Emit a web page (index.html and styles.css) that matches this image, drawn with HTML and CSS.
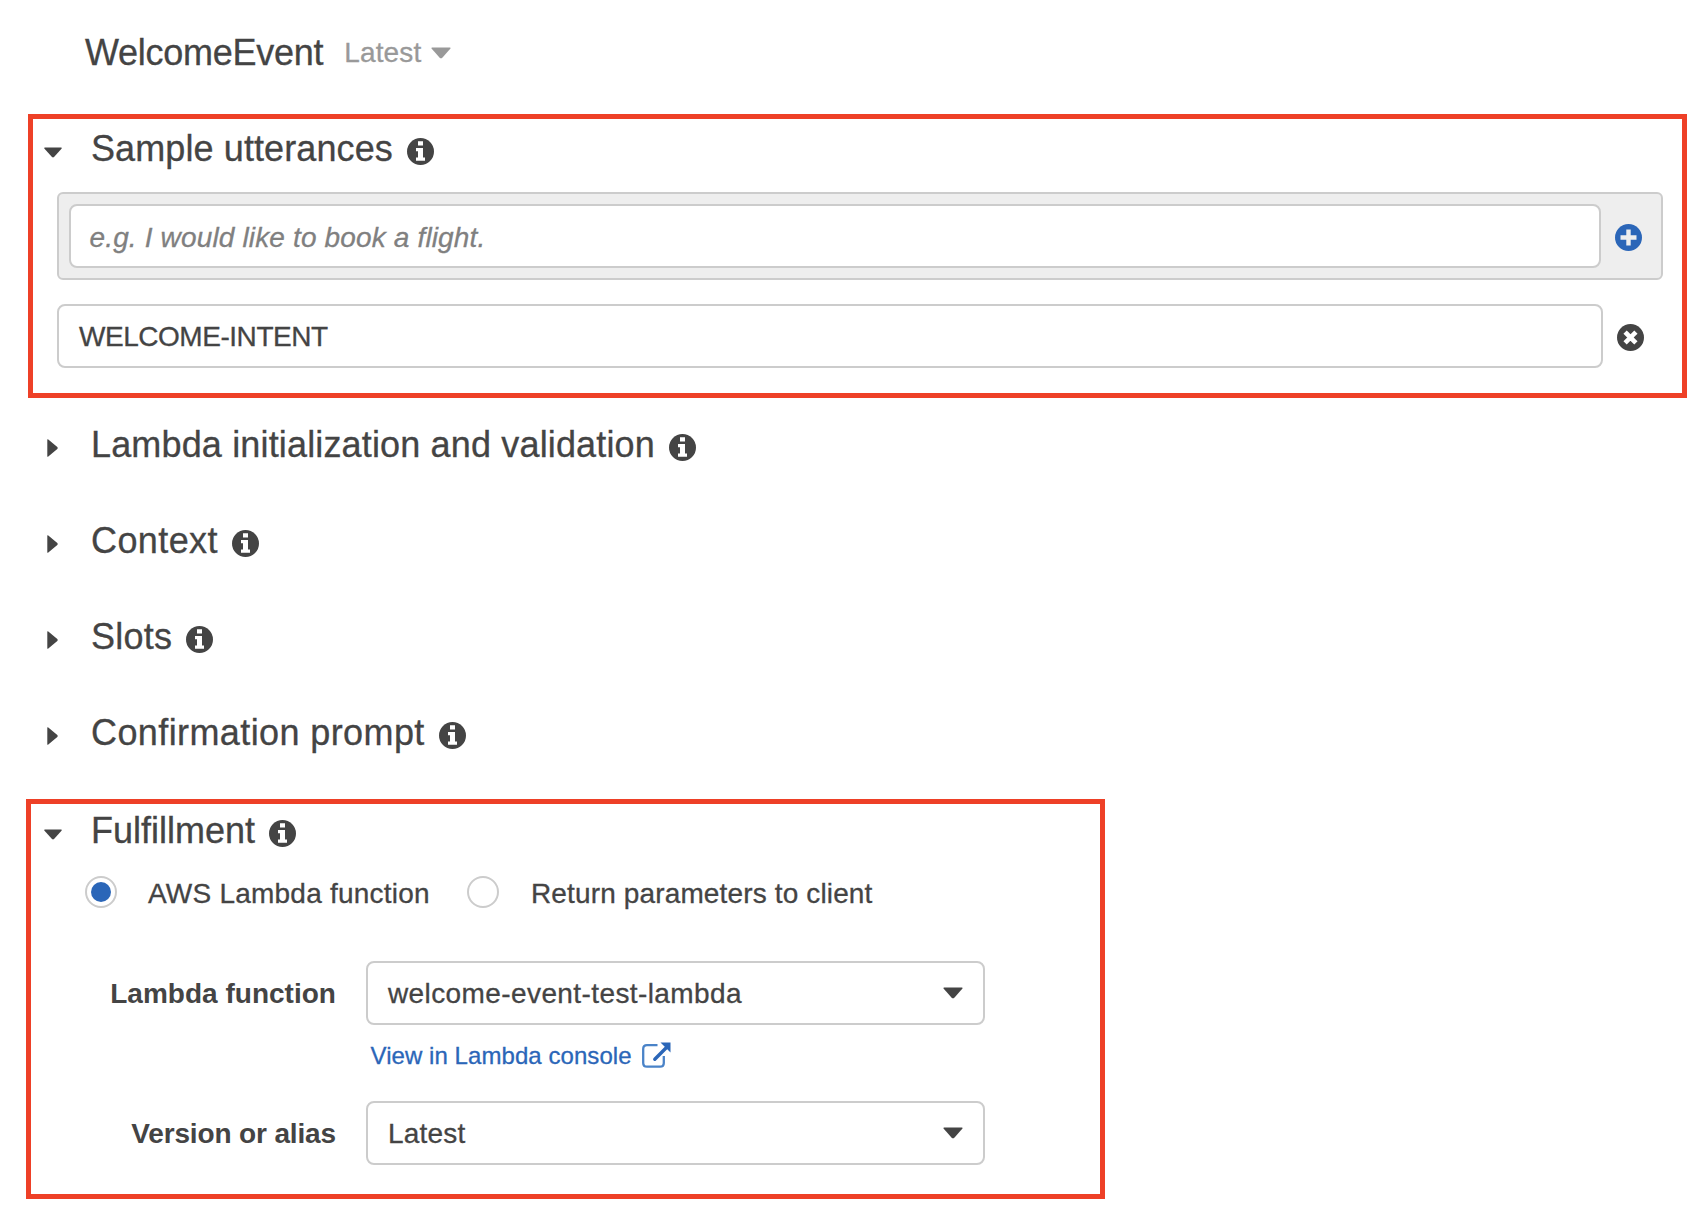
FILE: index.html
```html
<!DOCTYPE html>
<html lang="en">
<head>
<meta charset="utf-8">
<title>WelcomeEvent</title>
<link rel="stylesheet" href="styles.css">
</head>
<body>
<svg class="defs" aria-hidden="true">
  <symbol id="info" viewBox="0 0 27 27">
    <circle cx="13.5" cy="13.5" r="13.5" fill="#444"/>
    <path d="M11 3.2h5v4.2h-5zM9 10h7v9.600h2v3.200H9v-3.200h2V13.200H9z" fill="#fff"/>
  </symbol>
  <symbol id="down" viewBox="0 0 18 11">
    <path d="M.8.500h16.400q1 .3.300 1.200L10 10q-1 .8-2 0L.5 1.700Q-.2.800.8.500z" fill="currentColor"/>
  </symbol>
  <symbol id="right" viewBox="0 0 11 18">
    <path d="M.3.600Q.6-.2 1.300.400L10.300 8q.8 1 0 2L1.300 17.600Q.6 18.200.3 17.400z" fill="currentColor"/>
  </symbol>
</svg>

<header class="title-bar">
  <h1 class="title">WelcomeEvent</h1>
  <span class="version">Latest</span>
  <svg class="version-caret"><use href="#down"/></svg>
</header>

<section class="panel utterances">
  <h2 class="heading"><span class="toggle"><svg class="down"><use href="#down"/></svg></span><span class="t-sample">Sample utterances</span><svg class="info"><use href="#info"/></svg></h2>
  <div class="new-utterance">
    <div class="field placeholder">e.g. I would like to book a flight.</div>
    <svg class="action" viewBox="0 0 27 27"><circle cx="13.500" cy="13.500" r="13.500" fill="#2b66b8"/><path d="M13.500 7.700v11.600M7.700 13.500h11.600" stroke="#eee" stroke-width="4.400" stroke-linecap="square" fill="none"/></svg>
  </div>
  <div class="utterance">
    <div class="field value">WELCOME-INTENT</div>
    <svg class="action" viewBox="0 0 27 27"><circle cx="13.500" cy="13.500" r="13.500" fill="#444"/><path d="M9.700 9.700l7.600 7.600M17.300 9.700l-7.600 7.600" stroke="#fff" stroke-width="4.600" stroke-linecap="square" fill="none"/></svg>
  </div>
</section>

<div class="collapsed">
  <h2 class="heading"><span class="toggle"><svg class="right"><use href="#right"/></svg></span><span class="t-init">Lambda initialization and validation</span><svg class="info"><use href="#info"/></svg></h2>
  <h2 class="heading"><span class="toggle"><svg class="right"><use href="#right"/></svg></span><span class="t-context">Context</span><svg class="info"><use href="#info"/></svg></h2>
  <h2 class="heading"><span class="toggle"><svg class="right"><use href="#right"/></svg></span><span class="t-slots">Slots</span><svg class="info"><use href="#info"/></svg></h2>
  <h2 class="heading"><span class="toggle"><svg class="right"><use href="#right"/></svg></span><span class="t-confirm">Confirmation prompt</span><svg class="info"><use href="#info"/></svg></h2>
</div>

<section class="panel fulfillment">
  <h2 class="heading"><span class="toggle"><svg class="down"><use href="#down"/></svg></span><span>Fulfillment</span><svg class="info"><use href="#info"/></svg></h2>
  <div class="radios">
    <span class="radio checked"></span><span class="radio-label aws">AWS Lambda function</span>
    <span class="radio"></span><span class="radio-label return">Return parameters to client</span>
  </div>
  <div class="form">
    <span class="label">Lambda function</span>
    <div class="select"><span class="fn-name">welcome-event-test-lambda</span><svg class="select-caret"><use href="#down"/></svg></div>
    <a class="link"><span>View in Lambda console</span>
      <svg class="external" viewBox="0 0 29 26"><path d="M15.500 3.200H5q-3.800 0-3.800 3.800v14q0 3.700 3.800 3.700h13q3.800 0 3.800-3.700v-7" fill="none" stroke="#4a83c8" stroke-width="2.300"/><path d="M12.800 17.200L24 6" stroke="#2b66b8" stroke-width="3.400" stroke-linecap="round"/><path d="M18.500.500h10v10z" fill="#2b66b8"/></svg></a>
    <span class="label alias">Version or alias</span>
    <div class="select"><span class="alias-name">Latest</span><svg class="select-caret"><use href="#down"/></svg></div>
  </div>
</section>
</body>
</html>
```
FILE: styles.css
```css
* { box-sizing: border-box; }
body {
  margin: 0;
  background: #fff;
  color: #444;
  font: 28px/32px "Liberation Sans", Arial, sans-serif;
  white-space: nowrap;
  -webkit-text-stroke: .3px currentColor;
}
svg { display: block; flex: none; }
.defs { width: 0; height: 0; position: absolute; }

.title-bar {
  display: flex;
  align-items: center;
  height: 114px;
  padding: 0 0 9px 85px;
}
.title { margin: 0; font-size: 36px; line-height: 40px; font-weight: 400; letter-spacing: -.27px; }
.version { margin-left: 21px; color: #999; letter-spacing: .161px; }
.version-caret { width: 20px; height: 12px; margin: 1px 0 0 9.500px; color: #999; }

.panel { border: 5px solid #ee4027; }
.utterances { margin-left: 28px; width: 1659px; height: 284px; padding-top: 10px; }
.heading {
  display: flex;
  align-items: center;
  margin: 0;
  height: 40px;
  font-size: 36px;
  line-height: 40px;
  font-weight: 400;
}
.utterances .heading { padding-left: 11px; }
.fulfillment .heading { padding-left: 13px; }
.toggle { width: 18px; margin: 6px 29px 0 0; }
.down { width: 18px; height: 11px; }
.right { width: 11px; height: 18px; margin-left: 3px; }
.info { width: 27px; height: 27px; margin: 5px 0 0 14px; }
.t-sample { letter-spacing: .1px; }
.t-init { letter-spacing: .155px; }
.t-context { letter-spacing: .4px; }
.t-slots { letter-spacing: .25px; }
.t-confirm { letter-spacing: .4px; }

.field {
  height: 64px;
  border: 2px solid #ccc;
  border-radius: 8px;
  background: #fff;
  padding-left: 20px;
  line-height: 62px;
}
.new-utterance {
  display: flex;
  align-items: center;
  width: 1606px;
  height: 88px;
  margin: 23px 0 0 24px;
  padding-left: 10px;
  background: #eee;
  border: 2px solid #ccc;
  border-radius: 6px;
}
.new-utterance .field { width: 1532px; }
.action { width: 27px; height: 27px; margin: 3px 0 0 14px; }
.new-utterance .placeholder { padding-left: 18.500px; line-height: 63px; font-style: italic; color: #808080; letter-spacing: .15px; }
.utterance { display: flex; align-items: center; margin: 24px 0 0 24px; }
.utterance .field { width: 1546px; }
.value { letter-spacing: -.462px; }

.collapsed { display: flex; flex-direction: column; gap: 56px; padding: 27px 0 46px 44px; }

.fulfillment { margin-left: 26px; width: 1079px; height: 400px; padding-top: 7px; }
.radios { display: flex; align-items: center; height: 36px; margin: 23px 0 0 54px; }
.radio {
  display: flex;
  width: 32px;
  height: 32px;
  border: 2px solid #ccc;
  border-radius: 50%;
  padding: 4px;
}
.checked::before { content: ""; width: 20px; height: 20px; border-radius: 50%; background: #2b66b8; }
.radio-label { margin-top: 4px; margin-left: 31px; }
.aws { width: 319px; letter-spacing: .223px; }
.return { margin-left: 32px; letter-spacing: .14px; }

.form {
  display: grid;
  grid-template-columns: 305px 619px;
  grid-template-rows: 64px 76px 64px;
  column-gap: 30px;
  margin-top: 51px;
}
.label { text-align: right; font-weight: 700; line-height: 66px; letter-spacing: .018px; -webkit-text-stroke: 0; }
.alias { letter-spacing: -.14px; }
.select {
  display: flex;
  align-items: center;
  justify-content: space-between;
  height: 64px;
  border: 2px solid #ccc;
  border-radius: 8px;
  padding: 0 20px 0 20px;
}
.fn-name { padding-top: 2px; letter-spacing: .4px; }
.alias-name { padding-top: 2px; letter-spacing: .2px; }
.select-caret { width: 20px; height: 12px; margin-top: -1px; }
.link {
  grid-column: 2;
  display: flex;
  gap: 10.500px;
  padding: 17px 0 0 4.500px;
  color: #2b66b8;
  font-size: 24px;
  line-height: 28px;
  letter-spacing: .065px;
}
.external { width: 29px; height: 26px; }
```
